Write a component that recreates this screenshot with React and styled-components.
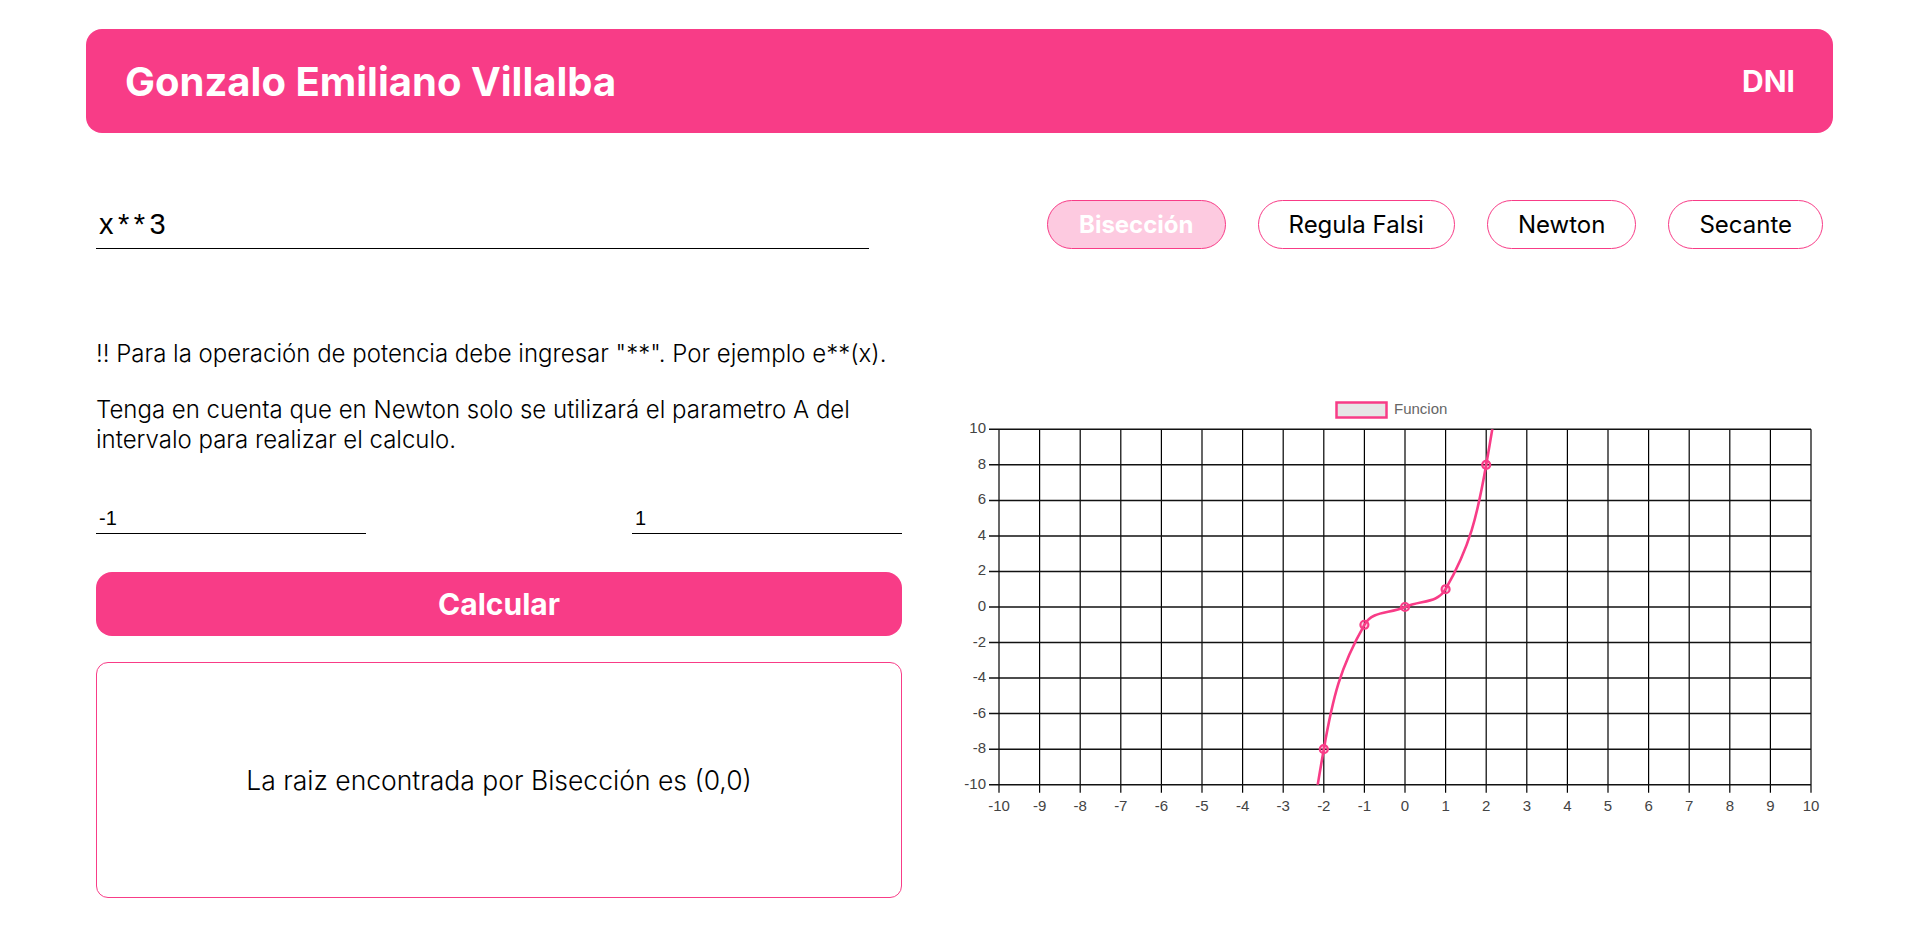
import React from 'react';
import styled, { createGlobalStyle } from 'styled-components';

const PINK = '#f83c87';
const LIGHT_PINK = '#fdcae0';

const GlobalStyle = createGlobalStyle`
	body {
		margin: 0;
		background: #fff;
		font-family: Inter, 'Noto Sans', sans-serif;
		color: #000;
	}
`;

// plot area inside the chart svg (px)
const X0 = 49;
const X1 = 861;
const Y0 = 37.3;
const Y1 = 392.7;
const px = (x) => X0 + ((x + 10) * (X1 - X0)) / 20;
const py = (y) => Y0 + ((10 - y) * (Y1 - Y0)) / 20;
const clamp = (v, a, b) => Math.min(Math.max(v, a), b);
const inArea = (p) => p && p.x >= X0 - 0.5 && p.x <= X1 + 0.5 && p.y >= Y0 - 0.5 && p.y <= Y1 + 0.5;

// same spline as chart.js (tension 0.4, control points capped inside the area)
const buildCurve = () => {
	const xs = [];
	for (let x = -10; x <= 10; x++) xs.push(x);
	const pts = xs.map((x) => ({ x: px(x), y: py(x ** 3), vx: x, vy: x ** 3 }));
	const t = 0.4;
	const cps = pts.map((cur, i) => {
		const prev = pts[i - 1] || cur;
		const next = pts[i + 1] || cur;
		const d01 = Math.hypot(cur.x - prev.x, cur.y - prev.y);
		const d12 = Math.hypot(next.x - cur.x, next.y - cur.y);
		let s01 = d01 / (d01 + d12);
		let s12 = d12 / (d01 + d12);
		if (isNaN(s01)) s01 = 0;
		if (isNaN(s12)) s12 = 0;
		const fa = t * s01;
		const fb = t * s12;
		const cp1 = { x: cur.x - fa * (next.x - prev.x), y: cur.y - fa * (next.y - prev.y) };
		const cp2 = { x: cur.x + fb * (next.x - prev.x), y: cur.y + fb * (next.y - prev.y) };
		if (inArea(cur)) {
			if (i > 0 && inArea(prev)) {
				cp1.x = clamp(cp1.x, X0, X1);
				cp1.y = clamp(cp1.y, Y0, Y1);
			}
			if (i < pts.length - 1 && inArea(next)) {
				cp2.x = clamp(cp2.x, X0, X1);
				cp2.y = clamp(cp2.y, Y0, Y1);
			}
		}
		return { cp1, cp2 };
	});
	let d = `M ${pts[0].x} ${pts[0].y}`;
	for (let i = 1; i < pts.length; i++) {
		const a = cps[i - 1].cp2;
		const b = cps[i].cp1;
		d += ` C ${a.x} ${a.y} ${b.x} ${b.y} ${pts[i].x} ${pts[i].y}`;
	}
	const visible = pts.filter((p) => p.vy >= -10 && p.vy <= 10);
	return { d, visible };
};

const Chart = () => {
	const { d, visible } = buildCurve();
	const xTicks = [];
	for (let x = -10; x <= 10; x++) xTicks.push(x);
	const yTicks = [];
	for (let y = 10; y >= -10; y -= 2) yTicks.push(y);

	return (
		<ChartSvg viewBox="0 0 873 430" width="873" height="430">
			<defs>
				<clipPath id="plot">
					<rect x={X0} y={Y0} width={X1 - X0} height={Y1 - Y0} />
				</clipPath>
			</defs>

			{/* legend */}
			<rect x="386.5" y="10.5" width="50" height="15" fill="#e6e6e6" stroke={PINK} strokeWidth="2.5" />
			<text x="444" y="18" className="legend">Funcion</text>

			{/* vertical grid */}
			{xTicks.map((x) => (
				<line key={`v${x}`} x1={px(x)} x2={px(x)} y1={Y0} y2={Y1 + 8} stroke="#000" strokeWidth="1.2" />
			))}
			{/* horizontal grid */}
			{yTicks.map((y) => (
				<line key={`h${y}`} x1={X0 - 10} x2={X1} y1={py(y)} y2={py(y)} stroke="#111" strokeWidth="1.5" />
			))}

			{yTicks.map((y) => (
				<text key={`yl${y}`} x="36" y={py(y)} className="tick" textAnchor="end">
					{y}
				</text>
			))}
			{xTicks.map((x) => (
				<text key={`xl${x}`} x={px(x)} y="415" className="tick" textAnchor="middle">
					{x}
				</text>
			))}

			<g clipPath="url(#plot)">
				<path d={d} fill="none" stroke={PINK} strokeWidth="2.6" />
			</g>
			{visible.map((p) => (
				<circle key={p.vx} cx={p.x} cy={p.y} r="4" fill="rgba(248,60,135,0.25)" stroke={PINK} strokeWidth="2.2" />
			))}
		</ChartSvg>
	);
};

const methods = ['Bisección', 'Regula Falsi', 'Newton', 'Secante'];

const App = () => {
	return (
		<Page>
			<GlobalStyle />
			<Header>
				<Title>Gonzalo Emiliano Villalba</Title>
				<Dni>DNI</Dni>
			</Header>
			<Main>
				<TopRow>
					<FunctionInput defaultValue="x**3" />
					<Methods>
						{methods.map((m, i) => (
							<MethodButton key={m} $active={i === 0}>
								{m}
							</MethodButton>
						))}
					</Methods>
				</TopRow>
				<Content>
					<LeftColumn>
						<Notes>
							<p>!! Para la operación de potencia debe ingresar "**". Por ejemplo e**(x).</p>
							<p>Tenga en cuenta que en Newton solo se utilizará el parametro A del intervalo para realizar el calculo.</p>
						</Notes>
						<IntervalRow>
							<IntervalInput defaultValue="-1" />
							<IntervalInput defaultValue="1" />
						</IntervalRow>
						<CalcButton>Calcular</CalcButton>
						<ResultBox>La raiz encontrada por Bisección es (0,0)</ResultBox>
					</LeftColumn>
					<ChartWrap>
						<Chart />
					</ChartWrap>
				</Content>
			</Main>
		</Page>
	);
};

export default App;

const Page = styled.div`
	padding: 29px 87px 30px 86px;
`;

const Header = styled.header`
	height: 104px;
	display: flex;
	align-items: center;
	justify-content: space-between;
	padding: 0 38px 0 39px;
	background: ${PINK};
	border-radius: 16px;
	color: #fff;
`;

const Title = styled.h1`
	margin: 0;
	font-size: 40px;
	font-weight: 700;
`;

const Dni = styled.span`
	font-size: 30px;
	font-weight: 700;
`;

const Main = styled.main`
	padding: 0 10px;
`;

const TopRow = styled.div`
	margin-top: 67px;
	display: flex;
	align-items: flex-end;
	justify-content: space-between;
`;

const FunctionInput = styled.input`
	box-sizing: border-box;
	width: 773px;
	height: 49px;
	padding: 1px 3px;
	border: none;
	border-bottom: 1px solid #000;
	outline: none;
	background: transparent;
	font-family: 'Liberation Sans', Arial, sans-serif;
	font-size: 29px;
	letter-spacing: 4.5px;
	color: #000;
`;

const Methods = styled.div`
	display: flex;
	gap: 32px;
`;

const MethodButton = styled.button`
	box-sizing: border-box;
	height: 49px;
	padding: 0 ${(p) => (p.$active ? 31 : 30)}px;
	border: 1px solid ${PINK};
	border-radius: 999px;
	background: ${(p) => (p.$active ? LIGHT_PINK : '#fff')};
	color: ${(p) => (p.$active ? '#fff' : '#000')};
	font-family: Inter, sans-serif;
	font-size: 24px;
	font-weight: ${(p) => (p.$active ? 700 : 400)};
	cursor: pointer;
`;

const Content = styled.div`
	margin-top: 90px;
	display: grid;
	grid-template-columns: 806px 1fr;
	column-gap: 48px;
	align-items: start;
`;

const LeftColumn = styled.div`
	display: flex;
	flex-direction: column;
`;

const Notes = styled.div`
	display: flex;
	flex-direction: column;
	gap: 26px;

	p {
		margin: 0;
		font-size: 24px;
		line-height: 30px;
		font-weight: 300;
	}
`;

const IntervalRow = styled.div`
	margin-top: 49px;
	display: flex;
	justify-content: space-between;
`;

const IntervalInput = styled.input`
	box-sizing: border-box;
	width: 270px;
	height: 30px;
	padding: 1px 3px;
	border: none;
	border-bottom: 1px solid #000;
	outline: none;
	background: transparent;
	font-family: 'Liberation Sans', Arial, sans-serif;
	font-size: 20px;
	color: #000;
`;

const CalcButton = styled.button`
	margin-top: 38px;
	height: 64px;
	border: none;
	border-radius: 16px;
	background: ${PINK};
	color: #fff;
	font-family: Inter, sans-serif;
	font-size: 30px;
	font-weight: 700;
	cursor: pointer;
`;

const ResultBox = styled.div`
	box-sizing: border-box;
	margin-top: 26px;
	height: 236px;
	display: flex;
	align-items: center;
	justify-content: center;
	border: 1px solid ${PINK};
	border-radius: 12px;
	font-size: 26.5px;
	font-weight: 300;
`;

const ChartWrap = styled.div`
	margin-top: 53px;
`;

const ChartSvg = styled.svg`
	display: block;

	text {
		font-family: 'Liberation Sans', Arial, sans-serif;
		font-size: 15px;
		dominant-baseline: middle;
	}

	.tick {
		fill: #444;
	}

	.legend {
		fill: #666;
	}
`;
